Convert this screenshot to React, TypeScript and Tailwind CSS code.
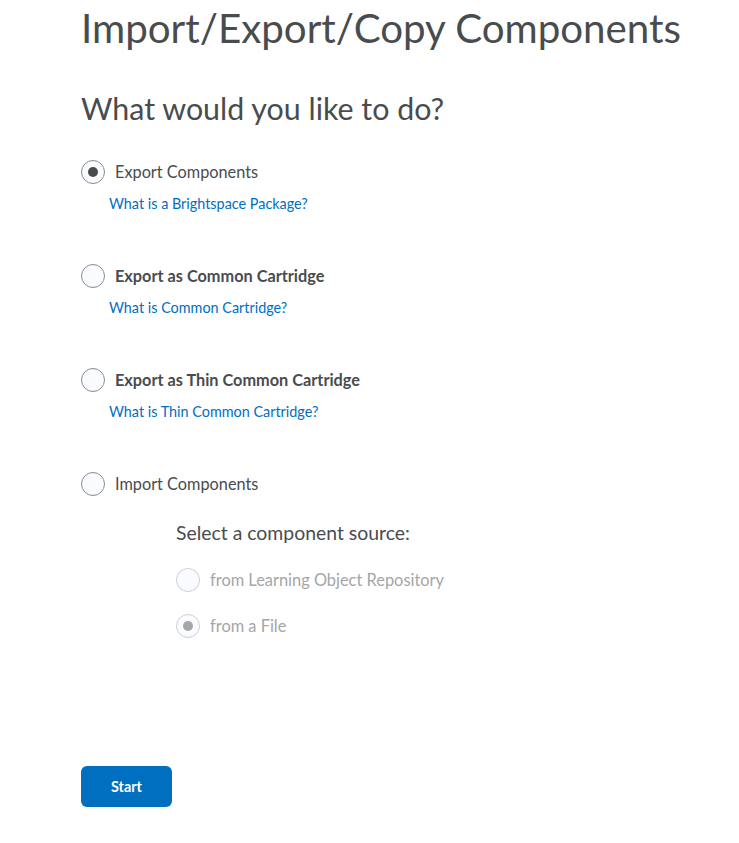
import React from "react";

function Radio({ checked = false, disabled = false }: { checked?: boolean; disabled?: boolean }) {
  return (
    <span
      className={
        "flex h-[24px] w-[24px] shrink-0 items-center justify-center rounded-full border bg-[#f9fbff] " +
        (disabled ? "border-[#cdd0d2]" : "border-[#868c8f]")
      }
    >
      {checked && (
        <span
          className={
            "block h-[10px] w-[10px] rounded-full " + (disabled ? "bg-[#a4a6a8]" : "bg-[#494c4e]")
          }
        />
      )}
    </span>
  );
}

function Option({
  label,
  bold = false,
  checked = false,
  link,
}: {
  label: string;
  bold?: boolean;
  checked?: boolean;
  link?: string;
}) {
  return (
    <div className="flex flex-col">
      <div className="flex items-center gap-[10px]">
        <Radio checked={checked} />
        <span className={"text-[16.3px] leading-[24px] text-[#494c4e] " + (bold ? "font-bold" : "font-normal")}>
          {label}
        </span>
      </div>
      {link && (
        <a className="ml-[28px] mt-[9.5px] text-[14.4px] leading-[20px] text-[#006fbf]" href="#">
          {link}
        </a>
      )}
    </div>
  );
}

export default function App() {
  return (
    <div
      className="min-h-[843px] bg-white px-[81px] pt-[4px] text-[#494c4e]"
      style={{ fontFamily: "Lato, 'Open Sans', sans-serif" }}
    >
      <h1 className="whitespace-nowrap text-[40.3px] leading-[48px] font-normal">Import/Export/Copy Components</h1>
      <h2 className="mt-[38px] whitespace-nowrap text-[30.4px] leading-[36px] font-normal">What would you like to do?</h2>
      <div className="mt-[34px] flex flex-col gap-[50.5px]">
        <Option label="Export Components" checked link="What is a Brightspace Package?" />
        <Option label="Export as Common Cartridge" bold link="What is Common Cartridge?" />
        <Option label="Export as Thin Common Cartridge" bold link="What is Thin Common Cartridge?" />
        <div className="flex flex-col">
          <Option label="Import Components" />
          <div className="ml-[95px] mt-[25px] flex flex-col">
            <div className="text-[19.4px] leading-[24px] text-[#494c4e]">Select a component source:</div>
            <div className="mt-[23px] flex items-center gap-[10px]">
              <Radio disabled />
              <span className="text-[16.4px] leading-[24px] text-[#a4a6a8]">from Learning Object Repository</span>
            </div>
            <div className="mt-[22px] flex items-center gap-[10px]">
              <Radio disabled checked />
              <span className="text-[16.4px] leading-[24px] text-[#a4a6a8]">from a File</span>
            </div>
          </div>
        </div>
      </div>
      <button className="mt-[128px] h-[41px] w-[91px] rounded-[6px] bg-[#006fbf] text-[14.4px] font-bold text-white">
        Start
      </button>
    </div>
  );
}
